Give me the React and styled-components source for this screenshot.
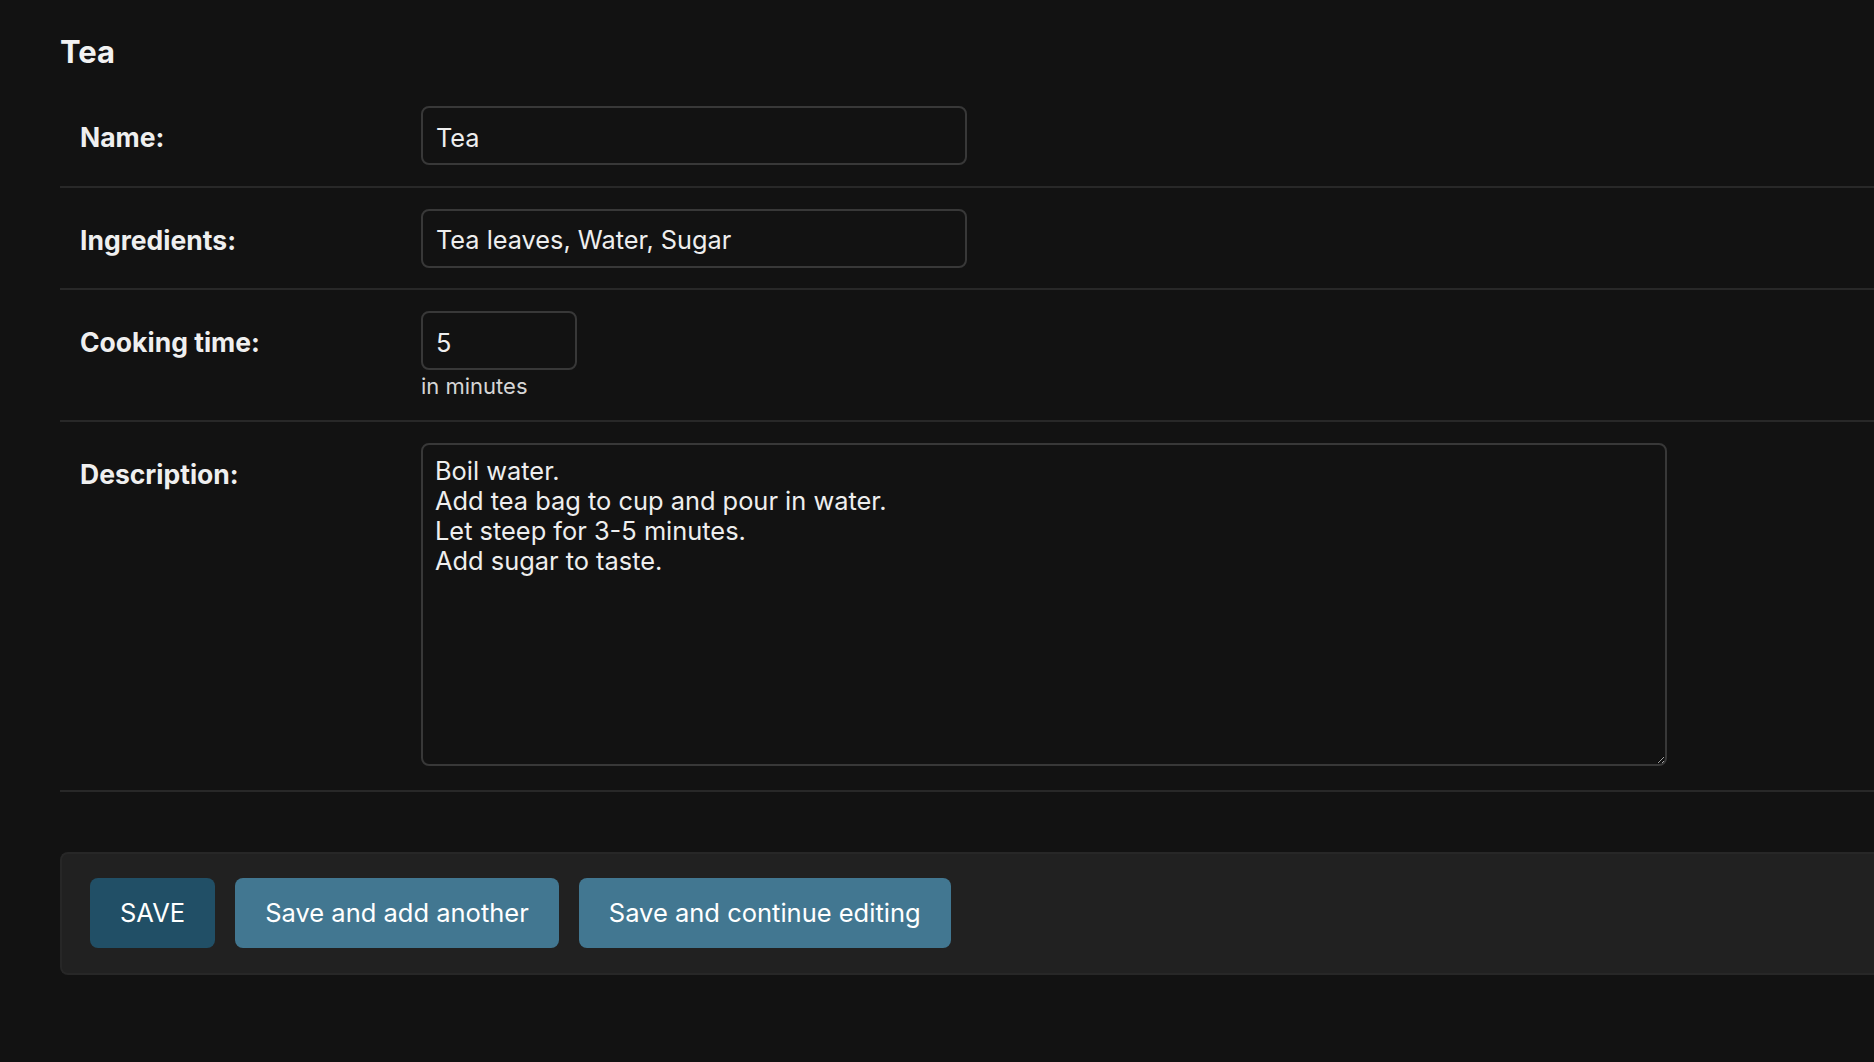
import React from 'react';
import styled, { createGlobalStyle } from 'styled-components';

const GlobalStyle = createGlobalStyle`
  html, body {
    margin: 0;
    padding: 0;
    background: #121212;
    color: #eeeeee;
    font-family: Inter, "Noto Sans", sans-serif;
    overflow: hidden;
  }
`;

const Page = styled.main`
  min-height: 1062px;
  padding: 33px 0 0 60px;
  box-sizing: border-box;
`;

const Title = styled.h2`
  margin: 0 0 14px;
  font-size: 31px;
  line-height: 38px;
  font-weight: 700;
  color: #f2f2f2;
`;

const Fieldset = styled.fieldset`
  margin: 0;
  padding: 0;
  border: none;
  min-width: 0;
`;

const Row = styled.div`
  display: flex;
  align-items: flex-start;
  padding: 21px 0 ${(p) => (p.$tall ? 24 : 20.5)}px 20px;
  border-bottom: 2px solid #282828;
`;

const Label = styled.label`
  flex: 0 0 341px;
  padding-top: 16px;
  font-size: 26.5px;
  line-height: 30px;
  font-weight: 700;
  color: #efefef;
`;

const Field = styled.div`
  display: flex;
  flex-direction: column;
  align-items: flex-start;
`;

const TextInput = styled.input`
  width: ${(p) => p.$width}px;
  height: 59px;
  box-sizing: border-box;
  padding: 14px 13px 11px;
  background: #121212;
  border: 2px solid #383838;
  border-radius: 8px;
  color: #eeeeee;
  font-family: Inter, sans-serif;
  font-size: 25.3px;
  line-height: 30px;
  outline: none;
`;

const TextArea = styled.textarea`
  display: block;
  width: 1246px;
  height: 323px;
  box-sizing: border-box;
  padding: 11px 12px;
  background: #121212;
  border: 2px solid #383838;
  border-radius: 8px;
  color: #eeeeee;
  color-scheme: dark;
  font-family: Inter, sans-serif;
  font-size: 25.4px;
  line-height: 30px;
  outline: none;
  resize: both;
`;

const Help = styled.div`
  margin-top: 3px;
  font-size: 22px;
  line-height: 26px;
  color: #d6d6d6;
`;

const SubmitRow = styled.div`
  display: flex;
  gap: 20px;
  margin-top: 60px;
  padding: 24px 28px 25px;
  background: #212121;
  border: 2px solid #272727;
  border-right: none;
  border-radius: 8px 0 0 8px;
`;

const Button = styled.button`
  height: 70px;
  padding: 0 30px;
  border: none;
  border-radius: 8px;
  background: ${(p) => (p.$primary ? '#214f66' : '#427791')};
  color: #ffffff;
  font-family: Inter, sans-serif;
  font-size: 25.5px;
  font-weight: 400;
  text-transform: ${(p) => (p.$primary ? 'uppercase' : 'none')};
  cursor: pointer;
`;

const description = `Boil water.
Add tea bag to cup and pour in water.
Let steep for 3-5 minutes.
Add sugar to taste.`;

export default function App() {
  return (
    <>
      <GlobalStyle />
      <Page>
        <Title>Tea</Title>
        <Fieldset>
          <Row>
            <Label htmlFor="id_name">Name:</Label>
            <Field>
              <TextInput id="id_name" $width={546} defaultValue="Tea" />
            </Field>
          </Row>
          <Row>
            <Label htmlFor="id_ingredients">Ingredients:</Label>
            <Field>
              <TextInput id="id_ingredients" $width={546} defaultValue="Tea leaves, Water, Sugar" />
            </Field>
          </Row>
          <Row>
            <Label htmlFor="id_cooking_time">Cooking time:</Label>
            <Field>
              <TextInput id="id_cooking_time" $width={156} defaultValue="5" />
              <Help>in minutes</Help>
            </Field>
          </Row>
          <Row $tall>
            <Label htmlFor="id_description">Description:</Label>
            <Field>
              <TextArea id="id_description" defaultValue={description} />
            </Field>
          </Row>
        </Fieldset>
        <SubmitRow>
          <Button $primary>Save</Button>
          <Button>Save and add another</Button>
          <Button>Save and continue editing</Button>
        </SubmitRow>
      </Page>
    </>
  );
}
